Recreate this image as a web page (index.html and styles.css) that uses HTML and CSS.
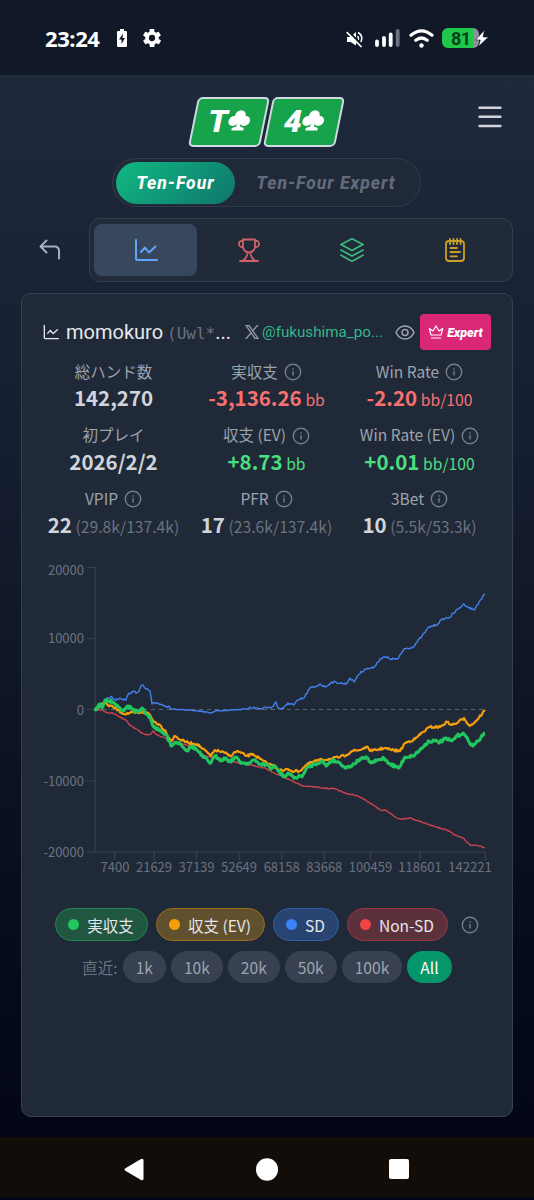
FILE: index.html
```html
<!DOCTYPE html>
<html lang="ja">
<head>
    <meta charset="UTF-8">
    <meta name="viewport" content="width=device-width, initial-scale=1.0">
    <title>Ten-Four</title>
    <link rel="stylesheet" href="styles.css">
</head>
<body>
    <!-- shared icons -->
    <svg class="defs" width="0" height="0">
        <symbol id="info" viewBox="0 0 18 18">
            <circle cx="9" cy="9" r="7.700" fill="none" stroke="currentColor" stroke-width="1.400"/>
            <path d="M9 8v4.500M9 5.200v1.500" stroke="currentColor" stroke-width="1.400"/>
        </symbol>
        <symbol id="chart-icon" viewBox="0 0 24 24">
            <path d="M2 2v18.500a1.500 1.500 0 0 0 1.500 1.500H23M7 14l4-4.500 4 5L21.500 8.500" fill="none" stroke="currentColor" stroke-width="2" stroke-linecap="round" stroke-linejoin="round"/>
        </symbol>
        <symbol id="club" viewBox="0 0 22 21">
            <circle cx="11" cy="5.500" r="5.300"/>
            <circle cx="5.300" cy="11" r="5.100"/>
            <circle cx="16.700" cy="11" r="5.100"/>
            <path d="M8 8h6v4h-6zM9.800 10h2.400l.8 6.500 4 1.500v2.500H5V18l4-1.500z"/>
        </symbol>
    </svg>

    <div class="status-bar">
        <div class="status-left">
            <span class="clock">23:24</span>
            <svg width="10" height="18" viewBox="0 0 10 18"><path d="M3 0h4v2h2q1 0 1 1v14q0 1-1 1H1q-1 0-1-1V3q0-1 1-1h2z" fill="#fff"/><path d="M6 4.500 2 10.500h2.500V15L8 9H5.500z" fill="#111827"/></svg>
            <svg width="18" height="18" viewBox="2 2 20 20"><path fill="#fff" d="M19.400 13a7.500 7.500 0 0 0 0-2l2.100-1.600a.5.5 0 0 0 .1-.7l-2-3.400a.5.5 0 0 0-.6-.2l-2.500 1a7.300 7.300 0 0 0-1.700-1L14.400 2.400A.5.5 0 0 0 14 2h-4a.5.500 0 0 0-.5.4l-.4 2.700a7.300 7.300 0 0 0-1.700 1l-2.500-1a.5.5 0 0 0-.6.200l-2 3.400a.5.5 0 0 0 .1.700L4.600 11a7.500 7.500 0 0 0 0 2l-2.100 1.600a.5.5 0 0 0-.1.700l2 3.400c.1.200.4.300.6.200l2.500-1a7.300 7.300 0 0 0 1.700 1l.4 2.700c0 .2.200.4.500.4h4c.2 0 .4-.2.500-.4l.4-2.700a7.300 7.300 0 0 0 1.700-1l2.500 1c.2.100.5 0 .6-.2l2-3.400a.5.500 0 0 0-.1-.7zM12 15.500a3.500 3.500 0 1 1 0-7 3.500 3.500 0 0 1 0 7z"/></svg>
        </div>
        <div class="status-right">
            <svg class="mute" width="17" height="17" viewBox="0 0 17 17"><path d="M1 6h3.500L10 1v13.500L4.500 11H1z" fill="#fff"/><path d="M11.500 5q2 2.500 0 5M12 1.500q6 3.500 2.500 10" fill="none" stroke="#fff" stroke-width="1.500"/><path d="M2.500.5 17 15" stroke="#111827" stroke-width="2"/><path d="M.7 1.200 15.500 16" stroke="#fff" stroke-width="1.700"/></svg>
            <svg class="signal" width="25" height="18" viewBox="0 0 25 18" stroke="#fff" stroke-width="3.800" stroke-linecap="round"><path d="M2 12.500V16M9 9v7M15.700 5.500V16"/><path d="M22.700 2V16" stroke="#6b7280"/></svg>
            <svg class="wifi" width="25" height="19" viewBox="0 0 25 19" fill="none" stroke="#fff" stroke-width="3.200" stroke-linecap="round"><path d="M2 6.200Q12.500-2.500 23 6.200M6.800 11.200Q12.500 6.800 18.200 11.200"/><circle cx="12.500" cy="16.500" r="2.200" fill="#fff" stroke="none"/></svg>
            <span class="battery">81</span>
            <svg class="bolt" width="14" height="17" viewBox="0 0 14 17"><path d="M9.500 0 .5 10h4.800L3.500 16.500 13.500 7H8z" fill="#fff" stroke="#111827" stroke-width=".6"/></svg>
        </div>
    </div>

    <div class="app">
        <header class="header">
            <div class="logo">
                <div class="card"><span class="card-face">T<svg width="22" height="21" fill="#fff"><use href="#club"/></svg></span></div>
                <div class="card"><span class="card-face">4<svg width="22" height="21" fill="#fff"><use href="#club"/></svg></span></div>
            </div>
            <svg class="menu" width="24" height="22" viewBox="0 0 24 22" stroke="#d1d5db" stroke-width="2.400" stroke-linecap="round"><path d="M1.500 1.700h21M1.500 10.800h21M1.500 20h21"/></svg>
        </header>

        <div class="switch">
            <span class="switch-item active">Ten-Four</span>
            <span class="switch-item">Ten-Four Expert</span>
        </div>

        <div class="nav">
            <svg class="back" width="22" height="22" viewBox="0 0 22 22" fill="none" stroke="#a5afc0" stroke-width="2" stroke-linecap="round" stroke-linejoin="round"><path d="M7.500 1.500 1.500 7.500l6 6M1.500 7.500h14q4.500 0 4.500 4.500v7.500"/></svg>
            <div class="tabs">
                <div class="tab blue active"><svg width="24" height="24"><use href="#chart-icon"/></svg></div>
                <div class="tab red"><svg width="24" height="24" viewBox="0 0 24 24"><path d="M6 1.500h12v7a6 6 0 0 1-12 0zM6 3H4.200q-1.500 0-1.800 1-1.800 4.500 3.600 5.500M18 3h1.800q1.500 0 1.800 1 1.800 4.500-3.600 5.500M3 23h18M10.500 14.500Q10.500 19 6.500 22.500M13.500 14.500q0 4.500 4 8"/></svg></div>
                <div class="tab green"><svg width="24" height="24" viewBox="0 0 24 24"><path d="M12 .8 23 6.500 12 12.500 1 6.500zM1 12l11 6 11-6M1 17.300l11 6 11-6"/></svg></div>
                <div class="tab yellow"><svg width="24" height="24" viewBox="0 0 24 24"><rect x="3" y="3" width="18" height="20" rx="3"/><path d="M7 1v5M10.500 1v5M14 1v5M17.500 1v5M7.500 10h6.500M7.500 14h9.500M7.500 18.300h6.500"/></svg></div>
            </div>
        </div>

        <main class="panel">
            <div class="profile">
                <svg class="profile-icon" width="16" height="16"><use href="#chart-icon"/></svg>
                <span class="name">momokuro</span>
                <span class="uid">(Uwl*<b>...</b></span>
                <svg class="x-logo" width="14" height="14" viewBox="0 0 24 24"><path fill="#9ca3af" stroke="#9ca3af" stroke-width=".8" d="M14.200 10.200 22.900 0h-2.100l-7.500 8.800L7.300 0H.4l9.100 13.300L.4 24h2.100l8-9.300 6.400 9.300h7zM3.200 1.600h3.200l14.500 20.800h-3.200z"/></svg>
                <span class="handle">@fukushima_po...</span>
                <svg class="eye" width="20" height="15" viewBox="0 0 20 15" fill="none" stroke="#9ca3af" stroke-width="1.500"><path d="M1 7.500Q4 1 10 1t9 6.500Q16 14 10 14T1 7.500z"/><circle cx="10" cy="7.500" r="3"/></svg>
                <span class="expert"><svg width="16" height="14" viewBox="0 0 16 14" fill="none" stroke="#fff" stroke-width="1.200" stroke-linejoin="round"><path d="m3 10-1.700-6.500L5 6l3-5 3 5 3.700-2.500L13 10zM3 13h10"/></svg>Expert</span>
            </div>

            <div class="stats">
                <div class="stat">
                    <div class="label">総ハンド数</div>
                    <div class="value">142,270</div>
                </div>
                <div class="stat">
                    <div class="label">実収支<svg><use href="#info"/></svg></div>
                    <div class="value minus">-3,136.26 <small>bb</small></div>
                </div>
                <div class="stat">
                    <div class="label">Win Rate<svg><use href="#info"/></svg></div>
                    <div class="value minus">-2.20 <small>bb/100</small></div>
                </div>
                <div class="stat">
                    <div class="label">初プレイ</div>
                    <div class="value">2026/2/2</div>
                </div>
                <div class="stat">
                    <div class="label">収支 (EV)<svg><use href="#info"/></svg></div>
                    <div class="value plus">+8.73 <small>bb</small></div>
                </div>
                <div class="stat">
                    <div class="label">Win Rate (EV)<svg><use href="#info"/></svg></div>
                    <div class="value plus">+0.01 <small>bb/100</small></div>
                </div>
                <div class="stat">
                    <div class="label">VPIP<svg><use href="#info"/></svg></div>
                    <div class="value">22 <small>(29.8k/137.4k)</small></div>
                </div>
                <div class="stat">
                    <div class="label">PFR<svg><use href="#info"/></svg></div>
                    <div class="value">17 <small>(23.6k/137.4k)</small></div>
                </div>
                <div class="stat">
                    <div class="label">3Bet<svg><use href="#info"/></svg></div>
                    <div class="value">10 <small>(5.5k/53.3k)</small></div>
                </div>
            </div>

            <svg class="chart" id="chart" width="490" height="330" viewBox="22 555 490 330">
                <path class="axis" d="M87 567.500h8M95 567V852.500M87 638.500h8M87 709.500h8M87 781h8M87 852H485.500M114.700 852v8M154 852v8M196.500 852v8M239 852v8M281.700 852v8M324.300 852v8M370.500 852v8M420 852v8M485.300 852v8"/>
                <path class="zero" d="M95 709.500H485"/>
                <g class="ticks y-ticks">
                    <text x="84" y="575">20000</text>
                    <text x="84" y="643">10000</text>
                    <text x="84" y="714.500">0</text>
                    <text x="84" y="785.500">-10000</text>
                    <text x="84" y="856.500">-20000</text>
                </g>
                <g class="ticks x-ticks">
                    <text x="115" y="872">7400</text>
                    <text x="154" y="872">21629</text>
                    <text x="196.500" y="872">37139</text>
                    <text x="239" y="872">52649</text>
                    <text x="281.700" y="872">68158</text>
                    <text x="324.300" y="872">83668</text>
                    <text x="370.500" y="872">100459</text>
                    <text x="420" y="872">118601</text>
                    <text x="470" y="872">142221</text>
                </g>
            </svg>

            <div class="legend">
                <span class="series actual">実収支</span>
                <span class="series ev">収支 (EV)</span>
                <span class="series sd">SD</span>
                <span class="series non-sd">Non-SD</span>
                <svg class="legend-info"><use href="#info"/></svg>
            </div>

            <div class="ranges">
                <span class="ranges-label">直近:</span>
                <span class="range">1k</span>
                <span class="range">10k</span>
                <span class="range">20k</span>
                <span class="range">50k</span>
                <span class="range">100k</span>
                <span class="range active">All</span>
            </div>
        </main>
    </div>

    <div class="system-nav">
        <svg width="20" height="23" viewBox="0 0 20 23"><path d="M1 10.500 17 1q2-.8 2.500 1v19q-.5 1.800-2.500 1L1 12.500q-1-1 0-2z" fill="#fff"/></svg>
        <svg width="22" height="23" viewBox="0 0 22 23"><ellipse cx="11" cy="11.500" rx="11" ry="11.200" fill="#fff"/></svg>
        <svg width="20" height="20" viewBox="0 0 20 20"><rect width="20" height="20" rx="2" fill="#fff"/></svg>
    </div>

    <script src="chart.js"></script>
</body>
</html>
```
FILE: styles.css
```css
* {
    box-sizing: border-box;
}
body {
    margin: 0;
    width: 534px;
    height: 1200px;
    display: flex;
    flex-direction: column;
    overflow: hidden;
    background: #020817;
    color: #d1d5db;
    font-family: "Noto Sans CJK JP", sans-serif;
}
svg {
    display: block;
    flex: none;
}
.defs {
    display: none;
}

/* phone status bar */
.status-bar {
    height: 77px;
    flex: none;
    display: flex;
    justify-content: space-between;
    padding: 0 44px 0 45px;
    background: #111827;
    border-bottom: 2px solid #252f3e;
}
.status-left,
.status-right {
    display: flex;
    align-items: center;
    height: 76px;
}
.status-left {
    gap: 16px;
}
.clock {
    font: bold 22px/28px "Noto Sans", sans-serif;
    color: #fff;
    letter-spacing: -0.4px;
    width: 56px;
    white-space: nowrap;
}
.mute {
    margin: 2px 12px 0 0;
}
.signal {
    margin-right: 9px;
}
.wifi {
    margin-right: 8px;
}
.battery {
    width: 37px;
    height: 20px;
    border-radius: 6px;
    background: linear-gradient(90deg, #1fc84b 31px, #8b9099 31px);
    color: #064016;
    font: bold 18px/21px Roboto, sans-serif;
    letter-spacing: -0.5px;
    padding-left: 9px;
}
.bolt {
    margin-left: -4px;
    margin-right: 1px;
}

.app {
    height: 1060px;
    flex: none;
    padding: 20px 21px 0;
    background: linear-gradient(#1e293b, #172033 30%, #0a1020 70%, #020617);
}
.header {
    display: flex;
    justify-content: flex-end;
    height: 61px;
}
.logo {
    display: flex;
    gap: 3px;
    margin-right: 138px;
}
.card {
    width: 72px;
    height: 50px;
    transform: skewX(-11.500deg);
    border: 2px solid #d1d9e2;
    border-radius: 5px;
    background: #17a34a;
}
.card-face {
    display: flex;
    align-items: center;
    justify-content: center;
    height: 46px;
    color: #fff;
    font: 900 31px/46px Roboto, sans-serif;
}
.card-face svg {
    margin: 0 0 3px;
}
.menu {
    margin: 9px 11px 0 0;
}

.switch {
    width: 309px;
    height: 49px;
    margin-left: 91px;
    padding: 3px;
    display: flex;
    border: 1px solid #323c4b;
    border-radius: 25px;
    background: #202938;
}
.switch-item {
    width: 184px;
    font: italic 800 17.500px/43px Roboto, sans-serif;
    letter-spacing: 1px;
    text-align: center;
    color: #626b7b;
}
.switch-item.active {
    width: 120px;
    height: 42px;
    border-radius: 21px;
    color: #fff;
    background: linear-gradient(135deg, #10b981, #0f766e);
}

.nav {
    display: flex;
    align-items: center;
    height: 64px;
    margin: 11px 0;
    padding-left: 18px;
}
.tabs {
    display: flex;
    width: 424px;
    height: 64px;
    margin-left: 28px;
    padding: 5px 6px 5px 4px;
    border: 1px solid #343e4d;
    border-radius: 11px;
    background: #202a38;
}
.tab {
    flex: 1;
    display: flex;
    align-items: center;
    justify-content: center;
    border-radius: 8px;
    color: #60a5fa;
}
.tab svg {
    fill: none;
    stroke: currentColor;
    stroke-width: 1.800;
    stroke-linecap: round;
    stroke-linejoin: round;
}
.tab.active {
    background: #37475e;
}
.tab.red {
    color: #d0616a;
}
.tab.green {
    color: #3fb57d;
}
.tab.yellow {
    color: #c99f2c;
}

.panel {
    width: 492px;
    height: 824px;
    padding: 20px 16px 0 15px;
    border: 1px solid #364150;
    border-radius: 10px;
    background: #202937;
}
.profile {
    display: flex;
    align-items: center;
    height: 36px;
    margin: 0 5px 7px 6px;
    white-space: nowrap;
}
.profile-icon {
    color: #e5e7eb;
}
.name {
    width: 97px;
    margin-left: 7px;
    font: 20px Roboto, sans-serif;
    color: #e5e7eb;
}
.uid {
    width: 63px;
    margin-left: 4px;
    font: 16px "DejaVu Sans Mono", monospace;
    color: #6b7280;
}
.uid b {
    font: 20px Roboto, sans-serif;
    color: #e5e7eb;
}
.x-logo {
    margin-left: 15px;
}
.handle {
    width: 121px;
    margin-left: 3px;
    font: 15.200px Roboto, sans-serif;
    color: #34b88b;
}
.eye {
    margin-left: 12px;
}
.expert {
    display: flex;
    align-items: center;
    justify-content: center;
    gap: 3px;
    width: 71px;
    height: 36px;
    margin-left: 5px;
    border-radius: 4px;
    background: #db2777;
    color: #fff;
    font: italic 900 12.500px Roboto, sans-serif;
}

.stats {
    display: grid;
    grid-template-columns: repeat(3, 153px);
    row-gap: 9.500px;
}
.stat {
    height: 54px;
}
.label {
    display: flex;
    justify-content: center;
    align-items: center;
    height: 27px;
    font-size: 15.500px;
    color: #9ca3af;
    white-space: nowrap;
}
.label svg {
    width: 18px;
    height: 18px;
    margin: 3px 0 0 6px;
    color: #727c8b;
}
.value {
    height: 27px;
    line-height: 27px;
    font-size: 20.500px;
    font-weight: bold;
    text-align: center;
    white-space: nowrap;
}
.value small {
    font-size: 15.700px;
    font-weight: normal;
    margin-left: -1px;
    color: #6b7280;
}
.value.minus,
.minus small {
    color: #f87171;
}
.value.plus,
.plus small {
    color: #4ade80;
}

.chart {
    margin: 17px -15px 0;
}
.axis {
    fill: none;
    stroke: #374151;
    stroke-width: 1.200;
}
.zero {
    stroke: #5b636d;
    stroke-dasharray: 4 4;
}
.ticks {
    font-size: 13px;
    fill: #6b7280;
}
.y-ticks {
    text-anchor: end;
}
.x-ticks {
    text-anchor: middle;
}
.line {
    fill: none;
    stroke-linejoin: round;
}

.legend {
    display: flex;
    align-items: center;
    gap: 8px;
    height: 33px;
    margin: 23px 0 10px 18px;
}
.series {
    display: flex;
    align-items: center;
    justify-content: center;
    height: 33px;
    border: 1px solid;
    border-radius: 17px;
    padding-right: 1px;
    font-size: 15.500px;
    color: #e5e7eb;
    white-space: nowrap;
}
.series::before {
    content: "";
    width: 11px;
    height: 11px;
    margin-right: 8px;
    border-radius: 50%;
}
.actual {
    width: 93px;
    background: #215740;
    border-color: #22874e;
}
.actual::before {
    background: #22c55e;
}
.ev {
    width: 109px;
    background: #60502d;
    border-color: #9b6f1c;
}
.ev::before {
    background: #f59e0b;
}
.sd {
    width: 66px;
    background: #284470;
    border-color: #315fa9;
}
.sd::before {
    background: #3b82f6;
}
.non-sd {
    width: 101px;
    background: #5c313b;
    border-color: #963a42;
}
.non-sd::before {
    background: #ef4444;
}
.legend-info {
    width: 18px;
    height: 18px;
    margin-left: 5px;
    color: #727c8b;
}

.ranges {
    display: flex;
    align-items: center;
    justify-content: center;
    gap: 5px;
    height: 32px;
    padding-left: 1px;
}
.ranges-label {
    font-size: 15.500px;
    color: #6b7280;
}
.range {
    height: 32px;
    padding: 0 13px;
    border-radius: 16px;
    background: #374151;
    color: #9ca3af;
    font-size: 15.600px;
    line-height: 32px;
}
.range.active {
    background: #059669;
    color: #fff;
}

/* phone navigation */
.system-nav {
    display: flex;
    justify-content: center;
    align-items: center;
    gap: 111.500px;
    height: 60px;
    flex: none;
    padding: 4px 1px 0 0;
    background: #120d09;
}
```
FILE: chart.js
```js
// cumulative results, already in chart coordinates
const series = [
    { color: '#d64550', width: 1.3, noise: 0.5, points: '95,710 102,710 108,713 113,713 120,717 126,720 130,725 136,729 142,733 147,735 151,734 153,731 157,735 165,738 171,741 190,746 205,756 215,757 235,762 250,765 265,768 276,774 280,775 290,780 303,786 315,787 335,789 345,793 358,796 370,803 380,810 386,810 395,817 400,819 410,818 425,823 436,827 447,830 455,835 463,838 470,845 476,845 485,848' },
    { color: '#4280ec', width: 1.4, noise: 1.1, points: '95,710 104,703 107,698 112,697 115,700 120,698 126,700 129,693 133,692 138,692 142,685 146,689 150,691 152,704 158,703 165,706 169,706 171,709 185,710 200,711 211,713 215,711 230,710 247,709 250,707 262,709 265,707 271,708 276,702 278,708 283,709 288,703 294,705 298,700 304,698 310,688 315,687 320,684 325,687 332,682 340,683 346,684 350,678 354,682 358,675 365,669 373,668 380,659 385,657 391,659 398,659 404,649 413,647 422,636 429,627 436,625 443,619 450,617 458,609 464,604 468,607 474,610 479,602 485,594' },
    { color: '#f59e0b', width: 2.2, noise: 1.2, points: '95,711 100,705 105,703 108,705 113,707 118,710 124,714 130,713 138,713 146,712 150,715 153,721 160,725 166,732 171,741 175,736 181,740 189,743 197,744 203,749 211,756 215,750 225,753 230,756 237,751 247,756 253,754 260,759 268,764 273,765 278,769 283,771 288,769 292,771 300,771 305,766 312,762 320,760 330,759 340,757 346,755 352,751 360,750 366,747 372,751 384,748 392,750 400,751 405,743 415,739 423,732 430,727 440,727 447,722 452,725 457,723 464,718 470,726 477,720 485,710' },
    { color: '#22c55e', width: 3, noise: 1.5, points: '95,711 98,706 100,704 102,708 105,700 108,701 113,702 116,706 120,708 124,711 128,706 132,709 138,712 142,708 146,714 150,717 153,726 160,731 166,735 170,742 171,746 176,742 181,744 187,751 192,746 197,750 203,757 211,763 215,756 221,760 226,758 230,762 235,757 242,763 250,763 253,760 260,764 268,765 271,769 275,766 280,773 285,777 288,773 292,776 296,778 303,775 308,767 315,764 322,761 326,766 332,760 340,763 346,768 354,764 360,759 367,758 371,763 384,758 390,764 399,768 405,757 413,756 420,750 429,741 435,741 440,742 445,739 452,741 457,736 463,733 468,740 473,746 478,741 485,733' }
];

let seed = 7;
function random() {
    seed = (seed * 16807) % 2147483647;
    return seed / 2147483647 - 0.5;
}

series.forEach(s => {
    const pts = s.points.split(' ').map(p => p.split(',').map(Number));
    let d = 'M' + pts[0];
    for (let i = 1; i < pts.length; i++) {
        const [x0, y0] = pts[i - 1];
        const [x1, y1] = pts[i];
        for (let x = x0 + 1; x < x1; x++) {
            const flat = s.width === 1.4 && x > 172 && x < 248;
            const y = y0 + (y1 - y0) * (x - x0) / (x1 - x0) + random() * s.noise * (flat ? 0.8 : 2);
            d += 'L' + x + ',' + y.toFixed(1);
        }
        d += 'L' + x1 + ',' + y1;
    }
    const path = document.createElementNS('http://www.w3.org/2000/svg', 'path');
    path.setAttribute('class', 'line');
    path.setAttribute('d', d);
    path.setAttribute('stroke', s.color);
    path.setAttribute('stroke-width', s.width);
    document.getElementById('chart').appendChild(path);
});
```
